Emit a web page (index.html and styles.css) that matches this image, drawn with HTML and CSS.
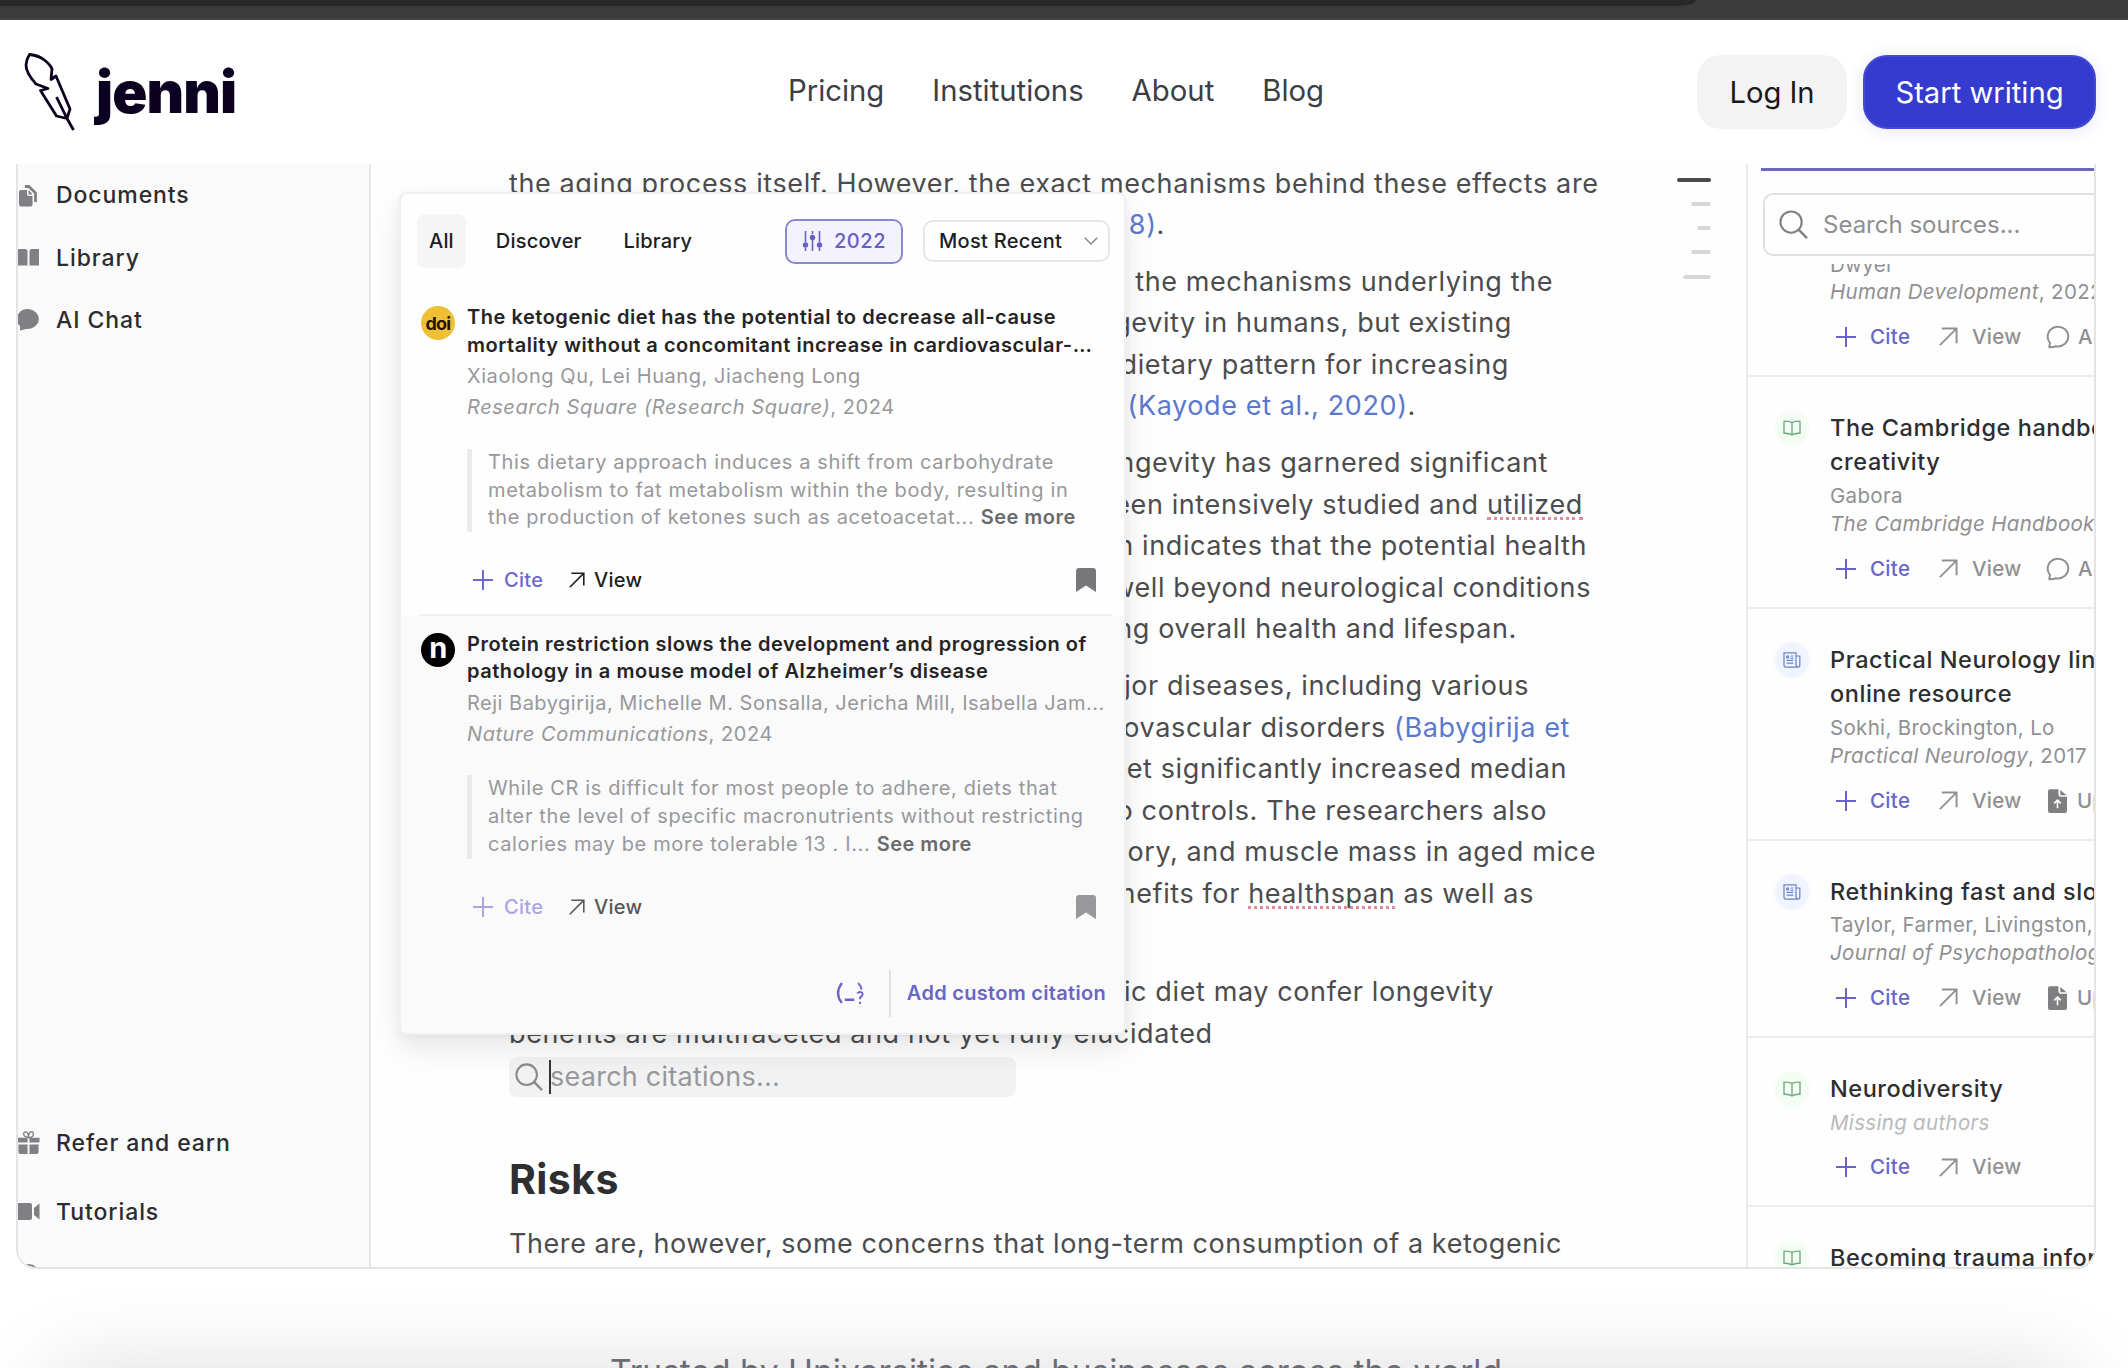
FILE: index.html
```html
<!DOCTYPE html>
<html lang="en">
<head>
<meta charset="utf-8">
<title>Jenni</title>
<link rel="stylesheet" href="styles.css">
</head>
<body>
<svg class="defs" aria-hidden="true">
  <symbol id="plus" viewBox="0 0 20 20"><path d="M10 0v20M0 10h20" fill="none" stroke="currentColor" stroke-width="2"/></symbol>
  <symbol id="arrow" viewBox="0 0 20 20"><path d="M1 19L18 2M3 1.500h15.500V17" fill="none" stroke="currentColor" stroke-width="2"/></symbol>
  <symbol id="search" viewBox="0 0 30 30"><circle cx="12.500" cy="12.500" r="11" fill="none" stroke="currentColor" stroke-width="2.200"/><path d="M20.500 20.500L29 29" stroke="currentColor" stroke-width="2.500"/></symbol>
  <symbol id="mark" viewBox="0 0 20 24"><path d="M0 3Q0 0 3 0H17Q20 0 20 3V24L10 17.500L0 24Z" fill="currentColor"/></symbol>
  <symbol id="chat" viewBox="0 0 24 24"><path d="M3.300 22.200L4 17.800A10.300 9.800 0 1 1 10 21.200Q7 22.300 3.300 22.200Z" fill="none" stroke="currentColor" stroke-width="2" stroke-linejoin="round"/></symbol>
  <symbol id="book" viewBox="0 0 20 18"><path d="M10 3Q6 .5 1 1.500V15Q6 14.500 10 16.800Q14 14.500 19 15V1.500Q14 .5 10 3V16.800" fill="none" stroke="currentColor" stroke-width="1.500"/></symbol>
  <symbol id="news" viewBox="0 0 20 18"><path d="M14.500 4.500H18.800V15Q18.800 17 17 17H3Q1 17 1 15V1H14.500V15Q14.500 17 16.500 17M4 12.500h7.500M4 9.500h7.500M8.500 4.500h3M8.500 7h3M4 4.500h2v2H4z" fill="none" stroke="currentColor" stroke-width="1.400"/></symbol>
  <symbol id="upload" viewBox="0 0 20 25"><path d="M2 0H11V5Q11 8 14 8H20V23Q20 25 18 25H2Q0 25 0 23V2Q0 0 2 0ZM13 1L19.500 6.500H13Z" fill="currentColor"/><path d="M10 20v-8M6.500 15L10 11.500L13.500 15" fill="none" stroke="#fff" stroke-width="1.700"/></symbol>
</svg>

<div class="chrome"><div class="chrome-tab"></div></div>

<header class="header">
  <a class="brand">
    <svg class="quill" viewBox="0 0 52 80"><path d="M6.500 2.500Q16 3.500 22 8.500T29 17L28 27.500L33 24L47 57L44 66.500L33.500 64L17.500 38.500L25 36.500L13 32Q3 21 3 13Q3.500 7 6.500 2.500ZM33.500 45L44 66.500L50.500 78" fill="none" stroke="currentColor" stroke-width="2.800" stroke-linejoin="round"/></svg>
    <span class="wordmark">jenni</span>
  </a>
  <nav class="nav"><a>Pricing</a><a>Institutions</a><a>About</a><a>Blog</a></nav>
  <div class="cta"><button class="btn btn-login">Log In</button><button class="btn btn-start">Start writing</button></div>
</header>

<main class="frame">
  <aside class="sidebar">
    <div class="side-top">
      <div class="side-item"><svg viewBox="0 0 23 23"><path d="M2 8Q2 6 4 6H10V10Q10 12 12 12H15.500V20.500Q15.500 22.500 13.500 22.500H4Q2 22.500 2 20.500Z" fill="currentColor"/><path d="M11.500 5.500L15.500 10.500H11.500Z" fill="currentColor"/><path d="M8 2.500H12L18.500 9V18" fill="none" stroke="currentColor" stroke-width="2.800" stroke-linejoin="round"/></svg>Documents</div>
      <div class="side-item"><svg viewBox="0 0 23 23"><path d="M0 3H8Q10.500 3 10.500 5V19.500H0ZM12.500 19.500V5Q12.500 3 15 3H22V19.500Z" fill="currentColor"/></svg>Library</div>
      <div class="side-item"><svg viewBox="0 0 23 23"><path d="M11.500 1A11.500 10 0 1 1 9 21L3 22.500V18A11.500 10 0 0 1 11.500 1Z" fill="currentColor"/></svg>AI Chat</div>
    </div>
    <div class="side-bottom">
      <div class="side-item"><svg viewBox="0 0 23 24"><path d="M0 7H10.500V12H0ZM12.500 7H23V12H12.500ZM1 14H10.500V24H3Q1 24 1 22ZM12.500 14H22V22Q22 24 20 24H12.500Z" fill="currentColor"/><path d="M11.500 7Q7 6 6.500 3.500T9 1Q11.500 2 11.500 7Q11.500 2 14 1T16.500 3.500T11.500 7" fill="none" stroke="currentColor" stroke-width="1.400"/></svg>Refer and earn</div>
      <div class="side-item"><svg viewBox="0 0 23 23"><path d="M0 5Q0 3 2 3H13Q15 3 15 5V18Q15 20 13 20H2Q0 20 0 18ZM17 8L22.500 3.500V19.500L17 15Z" fill="currentColor"/></svg>Tutorials</div>
      <div class="side-item"><svg viewBox="0 0 23 23"><circle cx="11.500" cy="11.500" r="10.500" fill="none" stroke="currentColor" stroke-width="2"/></svg>Help</div>
    </div>
  </aside>

  <article class="doc">
    <p><span class="full">the aging process itself. However, the exact mechanisms behind these effects are</span><span class="r1"><a>8)</a>.</span></p>
    <p><span class="r2">the mechanisms underlying the</span><span class="r3">longevity in humans, but existing</span><span class="r4">dietary pattern for increasing</span><span class="r5"><a>(Kayode et al., 2020)</a>.</span></p>
    <p><span class="r6">longevity has garnered significant</span><span class="r7">been intensively studied and <u>utilized</u></span><span class="r8">research indicates that the potential health</span><span class="r9">well beyond neurological conditions</span><span class="r10">enhancing overall health and lifespan.</span></p>
    <p><span class="r11">major diseases, including various</span><span class="r12">cardiovascular disorders <a>(Babygirija et</a></span><span class="r13">diet significantly increased median</span><span class="r14">to controls. The researchers also</span><span class="r15">memory, and muscle mass in aged mice</span><span class="r16">benefits for <u>healthspan</u> as well as</span><span class="blank"></span></p>
    <p><span class="r17">ic diet may confer longevity</span><span class="full">benefits are multifaceted and not yet fully elucidated</span></p>
    <div class="cite-search"><svg><use href="#search"/></svg><i></i>search citations...</div>
    <h2>Risks</h2>
    <p><span class="full last">There are, however, some concerns that long-term consumption of a ketogenic</span></p>
  </article>

  <div class="outline"><i></i><i></i><i></i><i></i><i></i></div>

  <aside class="sources">
    <div class="tabline"></div>
    <div class="source-search"><svg><use href="#search"/></svg>Search sources...</div>
    <div class="list">
      <section class="src first"><div class="src-body"><div class="by">Dwyer</div><div class="by"><em>Human Development</em>, 2022</div>
        <div class="acts"><span class="cite"><svg><use href="#plus"/></svg>Cite</span><span class="view"><svg><use href="#arrow"/></svg>View</span><span class="more"><svg class="bubble"><use href="#chat"/></svg>AI Chat</span></div></div></section>
      <section class="src"><div class="badge green"><svg><use href="#book"/></svg></div><div class="src-body"><h3>The Cambridge handbook of<br>creativity</h3><div class="by">Gabora</div><div class="by"><em>The Cambridge Handbook of</em></div>
        <div class="acts"><span class="cite"><svg><use href="#plus"/></svg>Cite</span><span class="view"><svg><use href="#arrow"/></svg>View</span><span class="more"><svg class="bubble"><use href="#chat"/></svg>AI Chat</span></div></div></section>
      <section class="src"><div class="badge blue"><svg><use href="#news"/></svg></div><div class="src-body"><h3>Practical Neurology links to<br>online resource</h3><div class="by">Sokhi, Brockington, Lo</div><div class="by"><em>Practical Neurology</em>, 2017</div>
        <div class="acts"><span class="cite"><svg><use href="#plus"/></svg>Cite</span><span class="view"><svg><use href="#arrow"/></svg>View</span><span class="more"><svg class="file"><use href="#upload"/></svg>Upload</span></div></div></section>
      <section class="src"><div class="badge blue"><svg><use href="#news"/></svg></div><div class="src-body"><h3>Rethinking fast and slow</h3><div class="by">Taylor, Farmer, Livingston, </div><div class="by"><em>Journal of Psychopathology</em></div>
        <div class="acts"><span class="cite"><svg><use href="#plus"/></svg>Cite</span><span class="view"><svg><use href="#arrow"/></svg>View</span><span class="more"><svg class="file"><use href="#upload"/></svg>Upload</span></div></div></section>
      <section class="src"><div class="badge green"><svg><use href="#book"/></svg></div><div class="src-body"><h3>Neurodiversity</h3><div class="by missing"><em>Missing authors</em></div>
        <div class="acts"><span class="cite"><svg><use href="#plus"/></svg>Cite</span><span class="view"><svg><use href="#arrow"/></svg>View</span></div></div></section>
      <section class="src"><div class="badge green"><svg><use href="#book"/></svg></div><div class="src-body"><h3>Becoming trauma informed</h3></div></section>
    </div>
  </aside>

  <div class="popover">
    <div class="pop-head">
      <span class="tab active">All</span><span class="tab">Discover</span><span class="tab">Library</span>
      <span class="year"><svg viewBox="0 0 20 20"><path d="M3 0V11M3 17V20M10 0V3M10 9V20M17 0V11M17 17V20" stroke="currentColor" stroke-width="1.600"/><circle cx="3" cy="14" r="2.700" fill="currentColor"/><circle cx="10" cy="6.500" r="2.700" fill="currentColor"/><circle cx="17" cy="14" r="2.700" fill="currentColor"/></svg>2022</span>
      <span class="sort">Most Recent<svg viewBox="0 0 14 8"><path d="M.8.8L7 7L13.200.8" fill="none" stroke="#888" stroke-width="1.500"/></svg></span>
    </div>
    <section class="hit">
      <div class="logo doi"><b>doi</b></div>
      <div class="hit-body">
        <h4>The ketogenic diet has the potential to decrease all-cause<br>mortality without a concomitant increase in cardiovascular-…</h4>
        <div class="who">Xiaolong Qu, Lei Huang, Jiacheng Long</div>
        <div class="who"><em>Research Square (Research Square)</em>, 2024</div>
        <blockquote>This dietary approach induces a shift from carbohydrate<br>metabolism to fat metabolism within the body, resulting in<br>the production of ketones such as acetoacetat... <b>See more</b></blockquote>
        <div class="hit-acts"><span class="cite"><svg><use href="#plus"/></svg>Cite</span><span class="view"><svg><use href="#arrow"/></svg>View</span><svg class="bm"><use href="#mark"/></svg></div>
      </div>
    </section>
    <section class="hit second">
      <div class="logo nat"><b>n</b></div>
      <div class="hit-body">
        <h4>Protein restriction slows the development and progression of<br>pathology in a mouse model of Alzheimer’s disease</h4>
        <div class="who long">Reji Babygirija, Michelle M. Sonsalla, Jericha Mill, Isabella Jam...</div>
        <div class="who"><em>Nature Communications</em>, 2024</div>
        <blockquote>While CR is difficult for most people to adhere, diets that<br>alter the level of specific macronutrients without restricting<br>calories may be more tolerable 13 . I... <b>See more</b></blockquote>
        <div class="hit-acts"><span class="cite"><svg><use href="#plus"/></svg>Cite</span><span class="view"><svg><use href="#arrow"/></svg>View</span><svg class="bm"><use href="#mark"/></svg></div>
      </div>
    </section>
    <footer class="pop-foot">
      <svg viewBox="0 0 30 24"><path d="M6 1Q-2 12 6 22M9 18.500H19" fill="none" stroke="currentColor" stroke-width="2.400"/><path d="M23 1Q26 4 26.500 8M22 12Q24 9.500 27 11Q29 14 25 16V18M25 20.500V23" fill="none" stroke="currentColor" stroke-width="2"/></svg>
      <span>Add custom citation</span>
    </footer>
  </div>
</main>

<section class="trusted"><p>Trusted by Universities and businesses across the world</p></section>
</body>
</html>
```
FILE: styles.css
```css
* { box-sizing: border-box; }
html, body { height: 1368px; }
body { margin: 0; overflow: hidden; background: #fff; font-family: Inter, "Liberation Sans", sans-serif; display: flex; flex-direction: column; font-synthesis: style; }
svg { display: block; flex: none; overflow: visible; }
.defs { position: absolute; width: 0; height: 0; }
p, h2, h3, h4, blockquote { margin: 0; }

.chrome { flex: none; height: 20px; background: #3b3b3b; border-bottom: 2px solid #454345; }
.chrome-tab { width: 1696px; height: 6px; background: #282828; border-bottom-right-radius: 18px 6px; }

.header { flex: none; height: 144px; padding: 0 32px 0 24px; display: grid; grid-template-columns: 1fr auto 1fr; align-items: center; margin-left: -8px; }
.brand { display: flex; align-items: center; color: #0c0120; height: 144px; padding-left: 8px; }
.quill { width: 52px; height: 80px; margin-left: -1px; }
.wordmark { font-weight: 900; font-size: 58px; line-height: 70px; letter-spacing: -.9px; margin-left: 21px; }
.nav { display: flex; gap: 48px; font-size: 29.300px; color: #3d3d45; margin-top: -3px; }
.cta { display: flex; gap: 16px; justify-content: flex-end; }
.btn { border: 0; height: 74px; border-radius: 24px; font: 400 29.200px/75px Inter, sans-serif; padding: 0; }
.btn-login { width: 150px; background: #f3f3f3; color: #18181b; }
.btn-start { width: 233px; background: #353bce; color: #fff; border: 2px solid #444bd2; line-height: 71px; box-shadow: 0 2px 16px rgba(53, 59, 206, .13); }

.frame { flex: none; position: relative; margin: 0 32px 0 16px; height: 1105px; border: 2px solid #e4e4e5; border-top: 0; border-radius: 0 0 20px 20px; overflow: hidden; display: flex; background: #fefefe; }

.sidebar { width: 353px; flex: none; background: #fafafa; border-right: 2px solid #e8e8e8; display: flex; flex-direction: column; justify-content: space-between; font-size: 23px; font-weight: 500; letter-spacing: .92px; color: #2c2c30; }
.side-item { display: flex; align-items: center; gap: 16px; margin-left: -1px; }
.side-item svg { width: 23px; height: 23px; color: #7f7f84; }
.side-top .side-item { height: 62.400px; }
.side-bottom { margin-bottom: -38px; }
.side-bottom .side-item { height: 69px; }
.side-bottom .side-item:last-child { height: 59px; }

.doc { width: 1167px; flex: none; padding-left: 138px; margin-top: -1.500px; color: #4c4c4e; font-size: 27px; letter-spacing: .61px; line-height: 41.520px; white-space: nowrap; }
.doc p { margin-bottom: 15.400px; }
.doc p span { display: flex; justify-content: flex-end; white-space: pre; }
.doc p .full { justify-content: flex-start; }
.doc p .last { letter-spacing: .57px; }
.doc .blank { height: 41.520px; }
.doc a { color: #5b78cf; }
.doc u { text-decoration: none; border-bottom: 3px dotted #e58a9c; line-height: 31px; height: 36px; padding-top: 5px; }
.r1 { width: 656px; } .r2 { width: 1044px; } .r3 { width: 1003px; } .r4 { width: 1000px; } .r5 { width: 907px; }
.r6 { width: 1039px; } .r7 { width: 1074px; } .r8 { width: 1078px; } .r9 { width: 1082px; } .r10 { width: 1008px; }
.r11 { width: 1020px; } .r12 { width: 1061px; } .r13 { width: 1058px; } .r14 { width: 1038px; } .r15 { width: 1087px; } .r16 { width: 1025px; }
.r17 { width: 985px; }
.cite-search { width: 507px; height: 40px; margin-top: -13px; border-radius: 8px; background: #f2f2f2; display: flex; align-items: center; padding-left: 6px; color: #98989a; letter-spacing: .25px; }
.cite-search svg { width: 28px; height: 28px; color: #8a8a8c; }
.cite-search i { width: 2px; height: 34px; background: #333; margin: 0 -1px 0 6px; }
.doc h2 { font-size: 41px; font-weight: 700; letter-spacing: .4px; line-height: 50px; color: #2f2f31; margin: 57.500px 0 19px; }

.outline { flex: none; width: 208px; padding: 13.500px 35px 0 0; display: flex; flex-direction: column; align-items: flex-end; gap: 20.300px; }
.outline i { width: 20px; height: 4px; border-radius: 2px; background: #d8d8d9; }
.outline i:first-child { width: 34px; background: #4a4a4c; }
.outline i:nth-child(3) { width: 14px; }
.outline i:last-child { width: 28px; }

.sources { flex: 1; min-width: 0; overflow: hidden; border-left: 2px solid #eaeaea; white-space: nowrap; display: flex; flex-direction: column; }
.tabline { flex: none; height: 3px; margin: 4px 0 22px 13px; background: #6c68c0; }
.source-search { flex: none; height: 63px; margin-left: 15px; border: 2px solid #e0e0e1; border-right: 0; border-radius: 10px 0 0 10px; display: flex; align-items: center; padding-left: 14px; gap: 15px; font-size: 24px; letter-spacing: 0; color: #8f8f91; }
.source-search svg { width: 29px; height: 29px; color: #808082; }
.list { margin-top: 8px; overflow: hidden; flex: 1; }
.src { display: flex; padding: 33.700px 0 25.200px 82px; border-bottom: 2px solid #ececec; color: #909092; letter-spacing: .32px; font-size: 20.500px; line-height: 27.700px; position: relative; }
.src.first { padding-top: 0; margin-top: -13.500px; }
.src h3 { font-size: 23.500px; font-weight: 500; letter-spacing: .55px; line-height: 34.700px; color: #2e2e30; margin-bottom: 2.200px; }
.badge { position: absolute; left: 27px; top: 34px; width: 34px; height: 34px; border-radius: 50%; display: flex; align-items: center; justify-content: center; }
.badge svg { width: 18px; height: 16px; }
.green { background: #f3fdf4; color: #6da87c; box-shadow: 0 0 4px #f3fdf4; }
.blue { background: #f0f4fe; color: #6b83cc; box-shadow: 0 0 4px #f0f4fe; }
.missing { color: #b9b9bb; }
.acts { display: flex; align-items: center; height: 26px; margin-top: 18px; padding-left: 6px; font-weight: 500; }
.acts span { display: flex; align-items: center; }
.acts svg { width: 20px; height: 20px; }
.acts .cite { color: #6a65c4; gap: 14px; width: 103px; }
.acts .view { gap: 14px; width: 107px; }
.acts .view svg { width: 19px; height: 19px; }
.acts .more { gap: 8px; letter-spacing: 0; }
.acts .bubble { width: 24px; height: 24px; }
.acts .file { width: 19px; height: 24px; margin: 0 2px; color: #7f7f81; }

.popover { position: absolute; left: 381px; top: 28px; width: 727px; height: 843px; background: #fefefe; border: 2px solid #f0f0f0; border-radius: 8px; box-shadow: 0 14px 30px rgba(0, 0, 0, .09), 0 2px 8px rgba(0, 0, 0, .05); white-space: nowrap; letter-spacing: .56px; font-size: 20px; display: flex; flex-direction: column; overflow: hidden; }
.pop-head { flex: none; margin: 20px 14px 0 16px; height: 54px; display: flex; align-items: center; font-weight: 500; font-size: 20px; color: #1d1d1f; }
.tab { height: 54px; line-height: 54px; padding: 0 12px; margin-right: 18px; border-radius: 8px; letter-spacing: .2px; }
.tab.active { background: #f5f5f5; }
.year { margin-left: auto; width: 118px; height: 45px; border: 2px solid #8b87d3; border-radius: 10px; background: #f3f2fd; color: #6660c0; display: flex; align-items: center; justify-content: center; gap: 11px; }
.year svg { width: 21px; height: 20px; }
.sort { margin-left: 20px; width: 187px; height: 42px; border: 2px solid #e6e6e6; border-radius: 10px; display: flex; align-items: center; justify-content: space-between; padding: 0 10px 0 14px; letter-spacing: .3px; }
.sort svg { width: 14px; height: 8px; }
.hit { display: flex; margin: 0 12px 0 18px; padding-top: 36px; height: 348px; border-bottom: 2px solid #f0f0f0; }
.hit.second { margin: 0; padding: 14.500px 12px 0 18px; height: 337px; border: 0; background: #fafafa; }
.logo { flex: none; width: 34px; height: 34px; margin: 2px 14px 0 2px; border-radius: 50%; display: flex; align-items: center; justify-content: center; letter-spacing: -.8px; }
.doi { background: #efbf34; color: #2a1208; font-size: 18px; }
.nat { background: #000; color: #fff; font-size: 29px; line-height: 28px; padding-bottom: 4px; }
.hit-body { flex: 1; min-width: 0; margin-left: -2px; }
.hit h4 { font-size: 20px; font-weight: 600; line-height: 27.700px; color: #242426; letter-spacing: .53px; margin-bottom: 2px; }
.who { line-height: 31px; color: #98989a; }
.who.long { letter-spacing: .5px; }
blockquote { margin-top: 25.500px; line-height: 27.700px; border-left: 5px solid #ebebec; padding-left: 16px; color: #98989a; letter-spacing: .63px; }
blockquote b { font-weight: 600; color: #6a6a6c; letter-spacing: .5px; }
.hit-acts { display: flex; align-items: center; height: 24px; margin-top: 36px; padding: 0 16px 0 6px; font-weight: 500; letter-spacing: .3px; }
.hit-acts span { display: flex; align-items: center; }
.hit-acts .cite { gap: 11px; width: 96px; color: #6e68cf; }
.hit-acts .view { gap: 9px; color: #1f1f21; }
.hit-acts svg { width: 20px; height: 20px; }
.hit-acts .view svg { width: 16px; height: 16px; }
.hit-acts .bm { width: 20px; height: 24px; margin-left: auto; color: #77777a; }
.second .cite { color: #aaa5e3; }
.second .view { color: #58585a; }
.second .bm { color: #98989b; }
.pop-foot { flex: 1; background: #fafafa; display: flex; align-items: center; justify-content: flex-end; gap: 24px; padding: 1px 18px 0 0; color: #6a65c6; font-weight: 600; }
.pop-foot svg { width: 29px; height: 23px; }
.pop-foot span { border-left: 2px solid #e2e2e2; padding-left: 16px; line-height: 47px; letter-spacing: .3px; }

.trusted { position: relative; overflow: hidden; flex: none; height: 99px; padding-top: 84px; text-align: center; font-size: 33.500px; line-height: 38px; color: #6b6b74; padding-right: 16px; white-space: nowrap; }
.trusted::before { content: ""; position: absolute; left: 50px; right: 50px; top: 103px; height: 100px; border-radius: 30px; box-shadow: 0 0 90px rgba(0, 0, 0, .15); }
.trusted p { position: relative; }
```
